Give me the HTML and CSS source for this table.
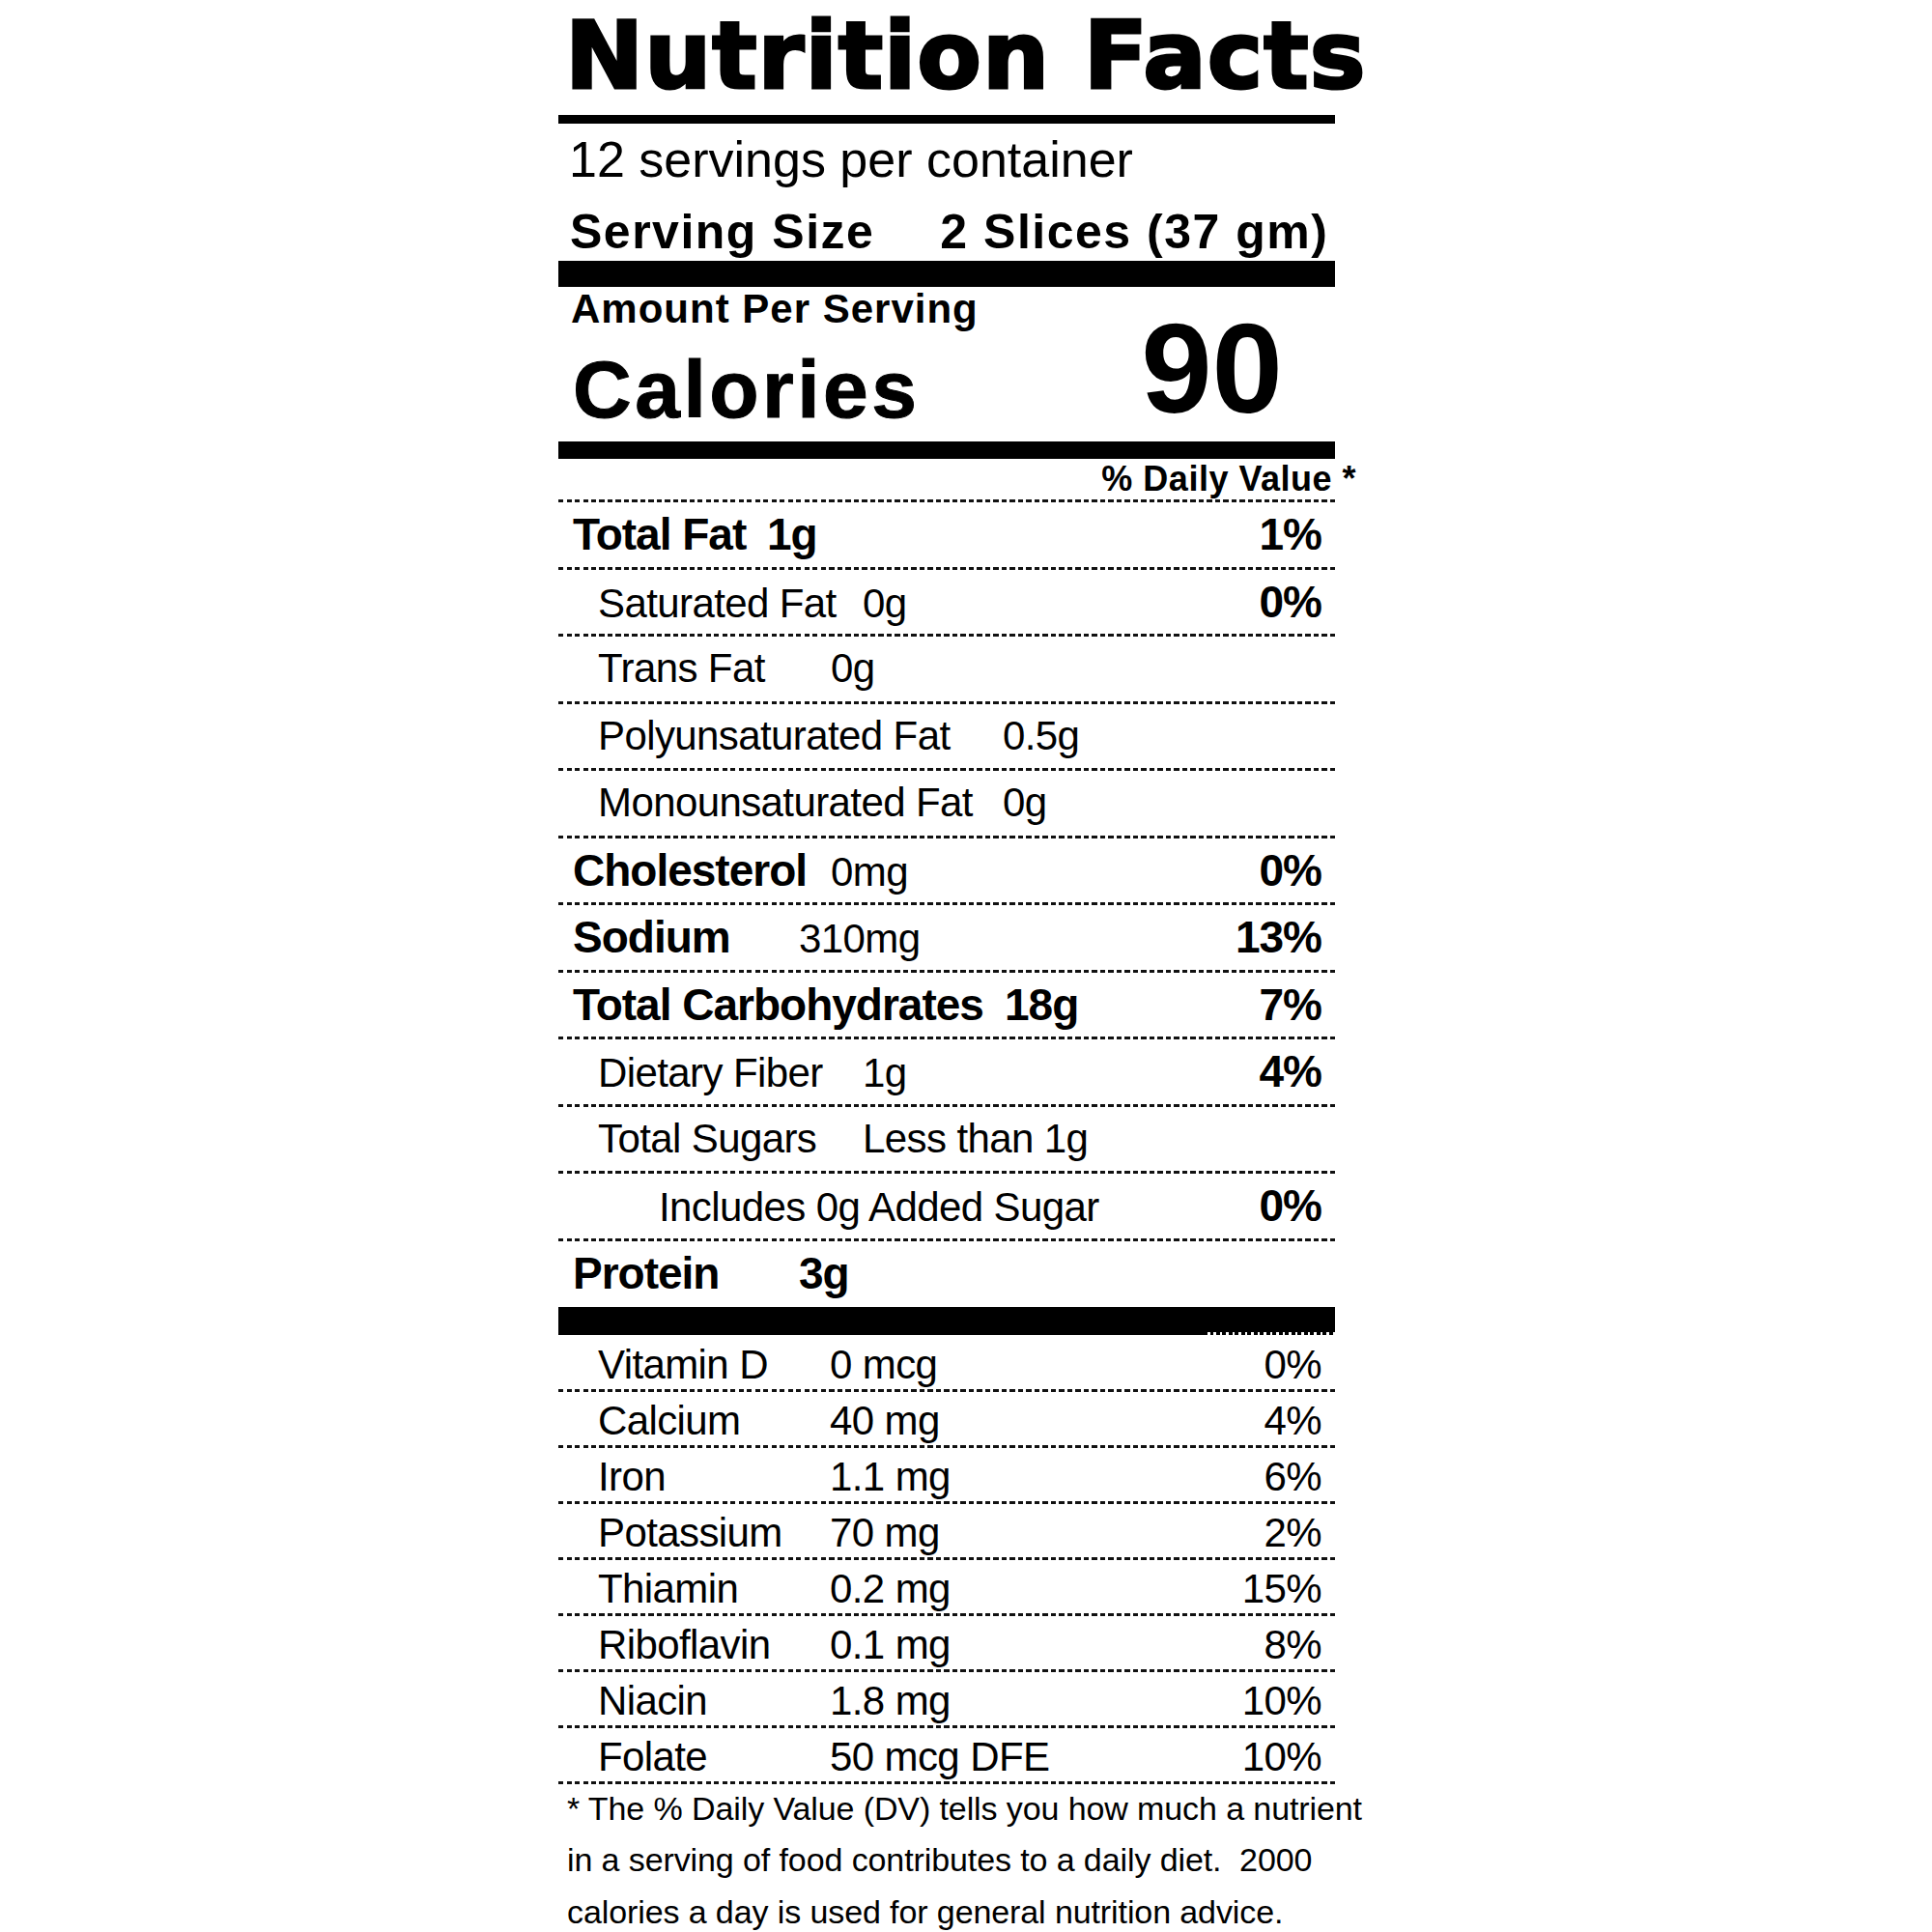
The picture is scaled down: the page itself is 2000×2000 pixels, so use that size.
FILE: index.html
```html
<!DOCTYPE html>
<html lang="en">
<head>
<meta charset="utf-8">
<title>Nutrition Facts</title>
<link rel="stylesheet" href="styles.css">
</head>
<body>
<div class="label">
  <h1 class="title">Nutrition Facts</h1>
  <div class="rule r1"></div>
  <p class="servings">12 servings per container</p>
  <p class="size"><span class="size-l">Serving Size</span><span class="size-v">2 Slices (37 gm)</span></p>
  <div class="rule r2"></div>
  <div class="cal">
    <div class="cal-left">
      <p class="aps">Amount Per Serving</p>
      <p class="cal-l">Calories</p>
    </div>
    <p class="cal-v">90</p>
  </div>
  <div class="rule r3"></div>
  <div class="dv-head dots">% Daily Value <span class="ast">*</span></div>

  <div class="row main dots"><span class="nm w201">Total Fat</span><span class="amt">1g</span><span class="pct">1%</span></div>
  <div class="row sub dots"><span class="nm w274">Saturated Fat</span><span class="amt">0g</span><span class="pct">0%</span></div>
  <div class="row sub dots"><span class="nm w241">Trans Fat</span><span class="amt">0g</span></div>
  <div class="row sub dots"><span class="nm w419">Polyunsaturated Fat</span><span class="amt">0.5g</span></div>
  <div class="row sub dots"><span class="nm w419">Monounsaturated Fat</span><span class="amt">0g</span></div>
  <div class="row main dots"><span class="nm w267">Cholesterol</span><span class="amt light">0mg</span><span class="pct">0%</span></div>
  <div class="row main dots"><span class="nm w234">Sodium</span><span class="amt light">310mg</span><span class="pct">13%</span></div>
  <div class="row main dots"><span class="nm w447">Total Carbohydrates</span><span class="amt">18g</span><span class="pct">7%</span></div>
  <div class="row sub dots"><span class="nm w274">Dietary Fiber</span><span class="amt">1g</span><span class="pct">4%</span></div>
  <div class="row sub dots"><span class="nm w274">Total Sugars</span><span class="amt">Less than 1g</span></div>
  <div class="row sub added dots"><span class="nm">Includes 0g Added Sugar</span><span class="pct">0%</span></div>
  <div class="row main protein"><span class="nm w234">Protein</span><span class="amt">3g</span></div>
  <div class="rule r4"></div>

  <div class="vit first dots"><span class="nm vw">Vitamin D</span><span class="amt">0 mcg</span><span class="vpct">0%</span></div>
  <div class="vit dots"><span class="nm vw">Calcium</span><span class="amt">40 mg</span><span class="vpct">4%</span></div>
  <div class="vit dots"><span class="nm vw">Iron</span><span class="amt">1.1 mg</span><span class="vpct">6%</span></div>
  <div class="vit dots"><span class="nm vw">Potassium</span><span class="amt">70 mg</span><span class="vpct">2%</span></div>
  <div class="vit dots"><span class="nm vw">Thiamin</span><span class="amt">0.2 mg</span><span class="vpct">15%</span></div>
  <div class="vit dots"><span class="nm vw">Riboflavin</span><span class="amt">0.1 mg</span><span class="vpct">8%</span></div>
  <div class="vit dots"><span class="nm vw">Niacin</span><span class="amt">1.8 mg</span><span class="vpct">10%</span></div>
  <div class="vit dots"><span class="nm vw">Folate</span><span class="amt">50 mcg DFE</span><span class="vpct">10%</span></div>

  <div class="foot">
    <span class="fl">* The % Daily Value (DV) tells you how much a nutrient</span>
    <span class="fl">in a serving of food contributes to a daily diet.  2000</span>
    <span class="fl">calories a day is used for general nutrition advice.</span>
  </div>
</div>
</body>
</html>
```
FILE: styles.css
```css
html, body {
  margin: 0;
  padding: 0;
  background: #fff;
}
body {
  color: #000;
  font-family: "Liberation Sans", Arial, sans-serif;
}
p, h1 {
  margin: 0;
}
.label {
  margin-left: 578px;
  width: 804px;
}
.title {
  font-family: "DejaVu Sans", "Liberation Sans", sans-serif;
  font-weight: 700;
  font-size: 97px;
  line-height: 100px;
  letter-spacing: 1px;
  padding: 8px 0 0 7px;
  white-space: nowrap;
  -webkit-text-stroke: 3px #000;
}
.rule {
  background: #000;
}
.r1 {
  height: 9px;
  margin-top: 11px;
}
.r2 {
  height: 27px;
}
.r3 {
  height: 18px;
}
.r4 {
  height: 29px;
  position: relative;
}
.r4::after {
  content: "";
  position: absolute;
  right: 0;
  bottom: 0;
  width: 136px;
  height: 3px;
  background: repeating-linear-gradient(to right, #000 0 4px, #fff 4px 6.5px);
}
.servings {
  font-size: 52px;
  line-height: 60px;
  margin-top: 7px;
  padding-left: 11px;
  white-space: nowrap;
}
.size {
  font-size: 50px;
  font-weight: 700;
  letter-spacing: 1.5px;
  line-height: 60px;
  margin-top: 15px;
  padding-left: 12px;
  white-space: nowrap;
}
.size-v {
  margin-left: 68px;
}
.cal {
  display: flex;
  justify-content: space-between;
  align-items: flex-start;
}
.aps {
  font-size: 42px;
  font-weight: 700;
  letter-spacing: 1px;
  line-height: 46px;
  padding-left: 13px;
  white-space: nowrap;
}
.cal-l {
  font-size: 84px;
  font-weight: 700;
  letter-spacing: 3.5px;
  line-height: 90px;
  margin-top: 15px;
  margin-bottom: 9px;
  padding-left: 15px;
  -webkit-text-stroke: 1px #000;
}
.cal-v {
  font-size: 132px;
  font-weight: 700;
  line-height: 120px;
  margin-top: 25px;
  padding-right: 54px;
}
.dots {
  background-image: repeating-linear-gradient(to right, #111 0 5px, transparent 5px 8.5px);
  background-size: 100% 3px;
  background-position: 0 100%;
  background-repeat: no-repeat;
}
.dv-head {
  font-size: 36px;
  font-weight: 700;
  letter-spacing: 0.5px;
  line-height: 42px;
  padding-bottom: 3px;
  text-align: right;
  white-space: nowrap;
}
.ast {
  margin-right: -22px;
}
.row {
  display: flex;
  align-items: baseline;
  box-sizing: border-box;
  height: 69.5px;
  padding-bottom: 3px;
  line-height: 66.5px;
  white-space: nowrap;
}
.row.main {
  font-size: 46px;
  font-weight: 700;
  letter-spacing: -1px;
  padding-left: 15px;
}
.row.sub {
  font-size: 42px;
  letter-spacing: -0.6px;
  padding-left: 41px;
}
.row.added {
  padding-left: 104px;
}
.row.protein {
  height: 68px;
  padding-bottom: 0;
}
.light {
  font-weight: 400;
  font-size: 42px;
  letter-spacing: -0.6px;
}
.nm {
  display: inline-block;
}
.w201 { width: 201px; }
.w234 { width: 234px; }
.w241 { width: 241px; }
.w267 { width: 267px; }
.w274 { width: 274px; }
.w419 { width: 419px; }
.w447 { width: 447px; }
.pct {
  margin-left: auto;
  padding-right: 14px;
  font-size: 46px;
  font-weight: 700;
  letter-spacing: -1px;
}
.vit {
  display: flex;
  align-items: baseline;
  box-sizing: border-box;
  height: 58px;
  padding: 4px 14px 3px 41px;
  font-size: 42px;
  letter-spacing: -0.6px;
  line-height: 51px;
  white-space: nowrap;
}
.vit.first {
  height: 59px;
  padding-top: 5px;
}
.vw {
  width: 240px;
}
.vpct {
  margin-left: auto;
}
.foot {
  margin-top: -1px;
  padding-left: 9px;
  font-size: 34px;
  letter-spacing: -0.1px;
  line-height: 53.5px;
}
.fl {
  display: block;
  white-space: pre;
}
```
